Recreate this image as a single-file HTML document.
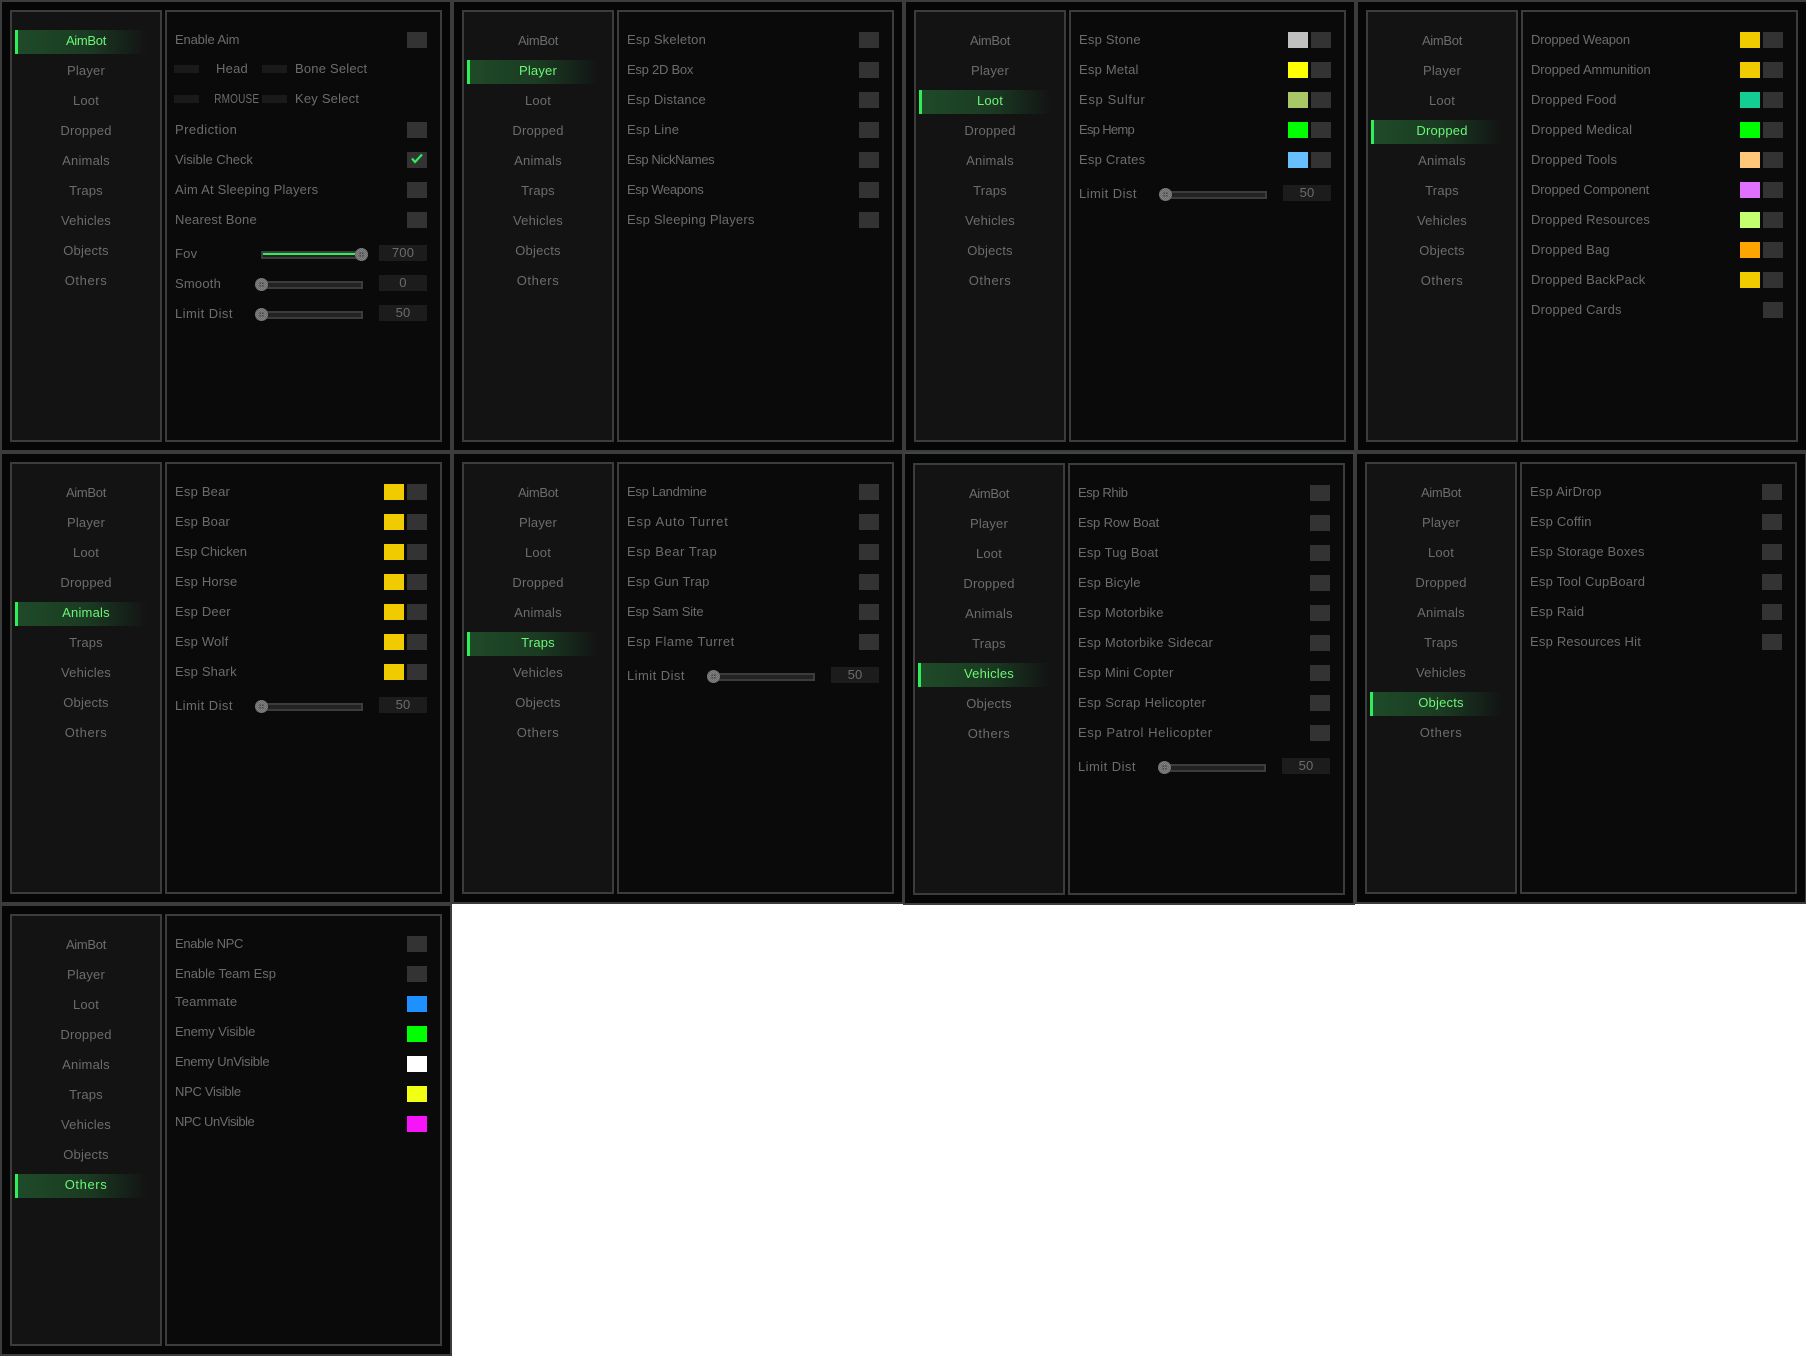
<!DOCTYPE html>
<html><head><meta charset="utf-8"><title>Menu</title>
<style>
html,body{margin:0;padding:0;background:#fff;width:1806px;height:1356px;overflow:hidden}
body{position:relative;font:13px/20px "Liberation Sans",sans-serif;letter-spacing:.2px;color:#6c6c6c}
.p{position:absolute;width:452px;height:452px;background:#060606;box-shadow:inset 0 0 0 2px #3c3c3c}
.s{position:absolute;left:10px;top:10px;width:152px;height:432px;box-sizing:border-box;background:#131313;border:2px solid #3c3c3c}
.m{position:absolute;left:165px;top:10px;width:277px;height:432px;box-sizing:border-box;background:#0a0a0a;border:2px solid #3c3c3c}
.nav{position:absolute;left:10px;top:26px;width:152px}
.nav div{position:relative;height:30px;line-height:30px;text-align:center}
.nav div:first-child{letter-spacing:-.3px}
.nav div:last-child{letter-spacing:.6px}
.nav .a{color:#6cf576}
.nav .a:before{content:"";position:absolute;left:5px;top:4px;width:137px;height:24px;border-left:3px solid #2eee5a;background:linear-gradient(90deg,#1e4a28 0,#1b3b22 50%,#15221a 78%,#131313 94%);z-index:0}
.nav .a span{position:relative}
.rows{position:absolute;left:165px;top:25px;width:277px}
.r{position:relative;height:30px;line-height:30px;padding-left:10px}
.t,.c{position:absolute;top:7px;width:20px;height:16px}
.t{left:242px;background:#333}
.c{left:219px}
.u{position:relative;top:-2px}
.b{position:absolute;top:10px;width:25px;height:8px;background:#1a1a1a}
.q{position:absolute;top:-1px}
.sl{position:relative;height:30px;line-height:30px;padding-left:10px}
.tr{position:absolute;left:96px;top:12px;width:102px;height:8px;box-sizing:border-box;background:#222;border:2px solid #3c3c3c}
.f{position:absolute;left:98px;top:14px;width:92px;height:2px;background:#2eee5a}
.k{position:absolute;left:90px;top:9px;width:13px;height:13px;border-radius:50%;background:repeating-conic-gradient(#828282 0 25%,#6a6a6a 0 50%) 0 0/2px 2px}
.k:after{content:"";position:absolute;left:4px;top:4px;width:5px;height:5px;background:radial-gradient(#444 .7px,transparent 1px) 0 0/2.5px 2.5px}
.v{position:absolute;left:214px;top:6px;width:48px;height:16px;line-height:16px;background:#1c1c1c;text-align:center}
</style></head><body>

<div class="p" style="left:0;top:0"><div class="s"></div><div class="m"></div>
<div class="nav"><div class="a"><span>AimBot</span></div><div>Player</div><div>Loot</div><div>Dropped</div><div>Animals</div><div>Traps</div><div>Vehicles</div><div>Objects</div><div>Others</div></div>
<div class="rows">
<div class="r" style="letter-spacing:-.15px">Enable Aim<i class="t"></i></div>
<div class="r"><i class="b" style="left:9px"></i><span class="q" style="left:44px;width:46px;text-align:center">Head</span><i class="b" style="left:97px"></i><span class="q" style="left:130px">Bone Select</span></div>
<div class="r"><i class="b" style="left:9px"></i><span class="q" style="left:44px;width:46px;text-align:center;transform:scaleX(.77);white-space:nowrap">RMOUSE</span><i class="b" style="left:97px"></i><span class="q" style="left:130px">Key Select</span></div>
<div class="r" style="letter-spacing:.45px">Prediction<i class="t"></i></div>
<div class="r" style="letter-spacing:-.05px">Visible Check<i class="t"><svg width="20" height="16" style="position:absolute;left:0;top:0"><path d="M5 6.5L8 10L15 2.5" fill="none" stroke="#2eee5a" stroke-width="2.2"/></svg></i></div>
<div class="r">Aim At Sleeping Players<i class="t"></i></div>
<div class="r">Nearest Bone<i class="t"></i></div>
<div class="sl" style="margin-top:4px">Fov<i class="tr"></i><i class="f"></i><i class="k" style="left:190px"></i><span class="v">700</span></div>
<div class="sl">Smooth<i class="tr"></i><i class="k"></i><span class="v">0</span></div>
<div class="sl"><span style="letter-spacing:.45px">Limit Dist</span><i class="tr"></i><i class="k"></i><span class="v">50</span></div>
</div></div>

<div class="p" style="left:452px;top:0"><div class="s"></div><div class="m"></div>
<div class="nav"><div>AimBot</div><div class="a"><span>Player</span></div><div>Loot</div><div>Dropped</div><div>Animals</div><div>Traps</div><div>Vehicles</div><div>Objects</div><div>Others</div></div>
<div class="rows">
<div class="r">Esp Skeleton<i class="t"></i></div>
<div class="r" style="letter-spacing:-.25px">Esp 2D Box<i class="t"></i></div>
<div class="r">Esp Distance<i class="t"></i></div>
<div class="r">Esp Line<i class="t"></i></div>
<div class="r" style="letter-spacing:-.4px">Esp NickNames<i class="t"></i></div>
<div class="r" style="letter-spacing:-.4px">Esp Weapons<i class="t"></i></div>
<div class="r">Esp Sleeping Players<i class="t"></i></div>
</div></div>

<div class="p" style="left:904px;top:0"><div class="s"></div><div class="m"></div>
<div class="nav"><div>AimBot</div><div>Player</div><div class="a"><span>Loot</span></div><div>Dropped</div><div>Animals</div><div>Traps</div><div>Vehicles</div><div>Objects</div><div>Others</div></div>
<div class="rows">
<div class="r">Esp Stone<i class="c" style="background:#c0c0c0"></i><i class="t"></i></div>
<div class="r">Esp Metal<i class="c" style="background:#ffff00"></i><i class="t"></i></div>
<div class="r" style="letter-spacing:.65px">Esp Sulfur<i class="c" style="background:#a8c868"></i><i class="t"></i></div>
<div class="r" style="letter-spacing:-.7px">Esp Hemp<i class="c" style="background:#00ff00"></i><i class="t"></i></div>
<div class="r">Esp Crates<i class="c" style="background:#66bfff"></i><i class="t"></i></div>
<div class="sl" style="margin-top:4px"><span style="letter-spacing:.45px">Limit Dist</span><i class="tr"></i><i class="k"></i><span class="v">50</span></div>
</div></div>

<div class="p" style="left:1356px;top:0"><div class="s"></div><div class="m"></div>
<div class="nav"><div>AimBot</div><div>Player</div><div>Loot</div><div class="a"><span>Dropped</span></div><div>Animals</div><div>Traps</div><div>Vehicles</div><div>Objects</div><div>Others</div></div>
<div class="rows">
<div class="r" style="letter-spacing:-.2px">Dropped Weapon<i class="c" style="background:#f0cb00"></i><i class="t"></i></div>
<div class="r" style="letter-spacing:-.1px">Dropped Ammunition<i class="c" style="background:#f0cb00"></i><i class="t"></i></div>
<div class="r">Dropped Food<i class="c" style="background:#12cc92"></i><i class="t"></i></div>
<div class="r">Dropped Medical<i class="c" style="background:#00ff00"></i><i class="t"></i></div>
<div class="r">Dropped Tools<i class="c" style="background:#ffc878"></i><i class="t"></i></div>
<div class="r" style="letter-spacing:-.15px">Dropped Component<i class="c" style="background:#e070ff"></i><i class="t"></i></div>
<div class="r">Dropped Resources<i class="c" style="background:#c4ff70"></i><i class="t"></i></div>
<div class="r">Dropped Bag<i class="c" style="background:#ffa500"></i><i class="t"></i></div>
<div class="r">Dropped BackPack<i class="c" style="background:#f0cb00"></i><i class="t"></i></div>
<div class="r">Dropped Cards<i class="t"></i></div>
</div></div>

<div class="p" style="left:0;top:452px"><div class="s"></div><div class="m"></div>
<div class="nav"><div>AimBot</div><div>Player</div><div>Loot</div><div>Dropped</div><div class="a"><span>Animals</span></div><div>Traps</div><div>Vehicles</div><div>Objects</div><div>Others</div></div>
<div class="rows">
<div class="r">Esp Bear<i class="c" style="background:#f0cb00"></i><i class="t"></i></div>
<div class="r">Esp Boar<i class="c" style="background:#f0cb00"></i><i class="t"></i></div>
<div class="r" style="letter-spacing:-.1px">Esp Chicken<i class="c" style="background:#f0cb00"></i><i class="t"></i></div>
<div class="r">Esp Horse<i class="c" style="background:#f0cb00"></i><i class="t"></i></div>
<div class="r">Esp Deer<i class="c" style="background:#f0cb00"></i><i class="t"></i></div>
<div class="r">Esp Wolf<i class="c" style="background:#f0cb00"></i><i class="t"></i></div>
<div class="r">Esp Shark<i class="c" style="background:#f0cb00"></i><i class="t"></i></div>
<div class="sl" style="margin-top:4px"><span style="letter-spacing:.45px">Limit Dist</span><i class="tr"></i><i class="k"></i><span class="v">50</span></div>
</div></div>

<div class="p" style="left:452px;top:452px"><div class="s"></div><div class="m"></div>
<div class="nav"><div>AimBot</div><div>Player</div><div>Loot</div><div>Dropped</div><div>Animals</div><div class="a"><span>Traps</span></div><div>Vehicles</div><div>Objects</div><div>Others</div></div>
<div class="rows">
<div class="r" style="letter-spacing:-.3px">Esp Landmine<i class="t"></i></div>
<div class="r" style="letter-spacing:.8px">Esp Auto Turret<i class="t"></i></div>
<div class="r" style="letter-spacing:.55px">Esp Bear Trap<i class="t"></i></div>
<div class="r">Esp Gun Trap<i class="t"></i></div>
<div class="r" style="letter-spacing:-.2px">Esp Sam Site<i class="t"></i></div>
<div class="r" style="letter-spacing:.5px">Esp Flame Turret<i class="t"></i></div>
<div class="sl" style="margin-top:4px"><span style="letter-spacing:.45px">Limit Dist</span><i class="tr"></i><i class="k"></i><span class="v">50</span></div>
</div></div>

<div class="p" style="left:1355px;top:452px"><div class="s"></div><div class="m"></div>
<div class="nav"><div>AimBot</div><div>Player</div><div>Loot</div><div>Dropped</div><div>Animals</div><div>Traps</div><div>Vehicles</div><div class="a"><span>Objects</span></div><div>Others</div></div>
<div class="rows">
<div class="r">Esp AirDrop<i class="t"></i></div>
<div class="r">Esp Coffin<i class="t"></i></div>
<div class="r">Esp Storage Boxes<i class="t"></i></div>
<div class="r">Esp Tool CupBoard<i class="t"></i></div>
<div class="r">Esp Raid<i class="t"></i></div>
<div class="r">Esp Resources Hit<i class="t"></i></div>
</div></div>

<div class="p" style="left:903px;top:453px;box-shadow:inset 2px 0 #3c3c3c,inset -2px 0 #3c3c3c,inset 0 -2px #3c3c3c"><div style="position:absolute;left:0;top:-1px;width:452px;height:2px;background:#3e4649"></div><div class="s"></div><div class="m"></div>
<div class="nav"><div>AimBot</div><div>Player</div><div>Loot</div><div>Dropped</div><div>Animals</div><div>Traps</div><div class="a"><span>Vehicles</span></div><div>Objects</div><div>Others</div></div>
<div class="rows">
<div class="r" style="letter-spacing:-.4px">Esp Rhib<i class="t"></i></div>
<div class="r" style="letter-spacing:-.1px">Esp Row Boat<i class="t"></i></div>
<div class="r">Esp Tug Boat<i class="t"></i></div>
<div class="r">Esp Bicyle<i class="t"></i></div>
<div class="r">Esp Motorbike<i class="t"></i></div>
<div class="r">Esp Motorbike Sidecar<i class="t"></i></div>
<div class="r">Esp Mini Copter<i class="t"></i></div>
<div class="r" style="letter-spacing:.3px">Esp Scrap Helicopter<i class="t"></i></div>
<div class="r" style="letter-spacing:.6px">Esp Patrol Helicopter<i class="t"></i></div>
<div class="sl" style="margin-top:4px"><span style="letter-spacing:.45px">Limit Dist</span><i class="tr"></i><i class="k"></i><span class="v">50</span></div>
</div></div>

<div class="p" style="left:0;top:904px"><div class="s"></div><div class="m"></div>
<div class="nav"><div>AimBot</div><div>Player</div><div>Loot</div><div>Dropped</div><div>Animals</div><div>Traps</div><div>Vehicles</div><div>Objects</div><div class="a"><span>Others</span></div></div>
<div class="rows">
<div class="r" style="letter-spacing:-.35px">Enable NPC<i class="t"></i></div>
<div class="r" style="letter-spacing:-.05px">Enable Team Esp<i class="t"></i></div>
<div class="r"><span class="u">Teammate</span><i class="t" style="background:#1e90ff"></i></div>
<div class="r"><span class="u" style="letter-spacing:-.15px">Enemy Visible</span><i class="t" style="background:#00ff00"></i></div>
<div class="r"><span class="u" style="letter-spacing:-.3px">Enemy UnVisible</span><i class="t" style="background:#ffffff"></i></div>
<div class="r"><span class="u" style="letter-spacing:-.3px">NPC Visible</span><i class="t" style="background:#f0ff14"></i></div>
<div class="r"><span class="u" style="letter-spacing:-.5px">NPC UnVisible</span><i class="t" style="background:#f814f8"></i></div>
</div></div>

</body></html>
